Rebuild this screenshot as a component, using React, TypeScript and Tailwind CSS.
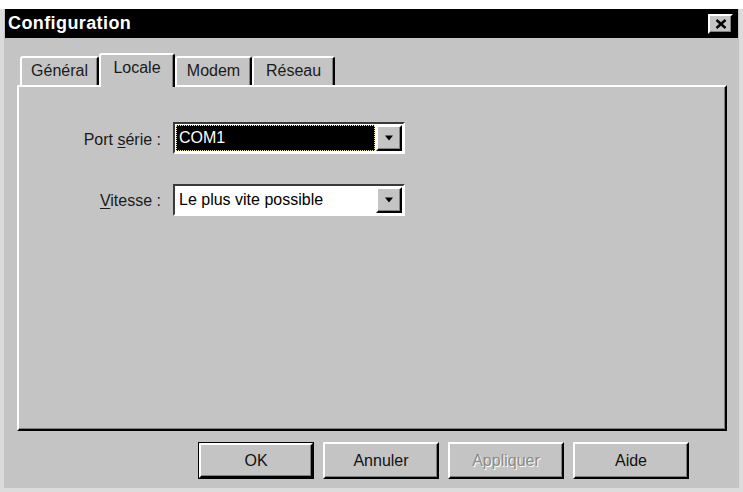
const raised =
  "border-2 border-t-white border-l-white border-r-black border-b-black shadow-[inset_-1px_-1px_0_#808080]";

const DropArrow = () => (
  <div className={`w-[26px] h-full flex items-center justify-center bg-[#c4c4c4] ${raised}`}>
    <svg width="10" height="6" viewBox="0 0 10 6">
      <path d="M1 0.5 L9 0.5 L5 5.5 Z" fill="#000" />
    </svg>
  </div>
);

const Tab = ({ label, width, active }: { label: string; width: string; active?: boolean }) => (
  <div
    className={`${width} ${
      active ? "h-[34px] -mb-[2px] relative z-10 pb-[7px]" : "h-[29px] pb-[2px]"
    } flex items-center justify-center bg-[#c4c4c4] border-t-2 border-l-2 border-r-2 border-t-white border-l-white border-r-black rounded-t-[3px] shadow-[inset_-1px_0_0_#808080] text-[16px] text-[#1a1a1a]`}
  >
    {label}
  </div>
);

const Button = ({ label, disabled, primary }: { label: string; disabled?: boolean; primary?: boolean }) => (
  <div className={`w-[116px] h-[37px] ${primary ? "border border-black" : ""}`}>
    <div
      className={`w-full h-full flex items-center justify-center bg-[#c4c4c4] ${raised} text-[16px] ${
        disabled ? "text-[#8a8a8a] [text-shadow:1px_1px_0_#fff]" : "text-[#111]"
      }`}
    >
      {label}
    </div>
  </div>
);

export default function App() {
  return (
    <div className="w-[743px] h-[492px] bg-white pt-[9px] font-['Liberation_Sans',Arial,sans-serif]">
      <div className="h-[483px] bg-[#c4c4c4] border-l-4 border-r-4 border-b-4 border-[#dcdcdc] px-[1px] flex flex-col">
        {/* title bar */}
        <div className="h-[29px] bg-black flex items-center justify-between pl-[3px] pr-[5px]">
          <span className="text-white font-bold text-[18px] tracking-[0.4px]">Configuration</span>
          <div className={`w-[25px] h-[20px] bg-[#c4c4c4] flex items-center justify-center ${raised}`}>
            <svg width="12" height="10" viewBox="0 0 12 10">
              <path d="M1.5 1 L10.5 9 M10.5 1 L1.5 9" stroke="#000" strokeWidth="2.4" />
            </svg>
          </div>
        </div>

        <div className="flex flex-col pl-[12px] pr-[11px]">
          {/* tabs */}
          <div className="mt-[15px] h-[32px] flex items-end pl-[3px]">
            <Tab label="Général" width="w-[79px]" />
            <Tab label="Locale" width="w-[76px]" active />
            <Tab label="Modem" width="w-[77px]" />
            <Tab label="Réseau" width="w-[83px]" />
          </div>

          {/* panel */}
          <div className="h-[346px] w-[710px] border-2 border-t-white border-l-white border-r-black border-b-black shadow-[inset_-1px_-1px_0_#808080] pt-[35px] flex flex-col gap-[30px] text-[16px] text-[#1a1a1a]">
            <div className="flex items-center h-[32px]">
              <div className="w-[143px] text-right pr-[1px] pt-[4px]">
                Port <span className="underline underline-offset-2">s</span>érie :
              </div>
              <div className="ml-[11px] w-[232px] h-[32px] flex border-2 border-t-[#3a3a3a] border-l-[#3a3a3a] border-r-white border-b-white bg-white p-[1px]">
                <div className="flex-1 bg-black border border-dotted border-[#e8e8b0] text-white flex items-center pl-[2px] mr-[1px]">
                  COM1
                </div>
                <DropArrow />
              </div>
            </div>
            <div className="flex items-center h-[32px]">
              <div className="w-[143px] text-right pr-[1px] pt-[2px]">
                <span className="underline underline-offset-2">V</span>itesse :
              </div>
              <div className="ml-[11px] w-[232px] h-[32px] flex border-2 border-t-[#3a3a3a] border-l-[#3a3a3a] border-r-white border-b-white bg-white p-[1px]">
                <div className="flex-1 flex items-center pl-[3px] text-black">Le plus vite possible</div>
                <DropArrow />
              </div>
            </div>
          </div>

          {/* buttons */}
          <div className="mt-[11px] flex justify-end gap-[9px] pr-[38px]">
            <Button label="OK" primary />
            <Button label="Annuler" />
            <Button label="Appliquer" disabled />
            <Button label="Aide" />
          </div>
        </div>
      </div>
    </div>
  );
}
